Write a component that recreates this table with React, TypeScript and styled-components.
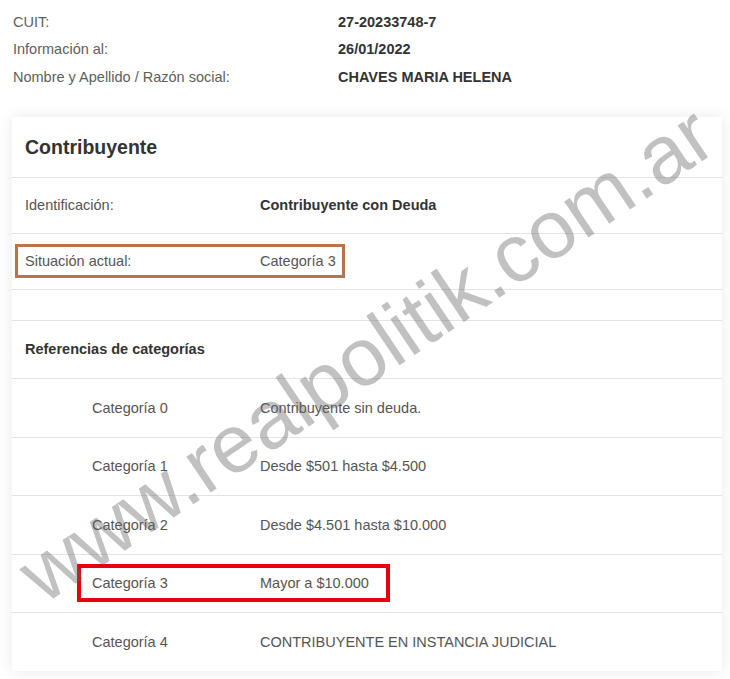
import styled, { createGlobalStyle } from "styled-components";

const GlobalStyle = createGlobalStyle`
  html, body {
    margin: 0;
    padding: 0;
    background: #fff;
  }
  body {
    font-family: "Liberation Sans", Arial, sans-serif;
    font-size: 14.5px;
    color: #555;
  }
  * {
    box-sizing: border-box;
  }
`;

const Page = styled.div`
  position: relative;
  width: 730px;
  min-height: 679px;
  overflow: hidden;
  background: #fff;
`;

const InfoGrid = styled.div`
  display: grid;
  grid-template-columns: 325px auto;
  grid-auto-rows: 27.5px;
  align-items: center;
  padding: 8px 13px 0 13px;
`;

const InfoLabel = styled.div`
  color: #5e5e5e;
`;

const InfoValue = styled.div`
  color: #333;
  font-weight: 700;
`;

const Card = styled.div`
  margin: 26px 8px 0 12px;
  background: #fff;
  box-shadow: 0 0 14px rgba(0, 0, 0, 0.09);
`;

const CardHeader = styled.div`
  height: 61px;
  display: flex;
  align-items: center;
  padding: 2px 13px 0 13px;
  border-bottom: 1px solid #e4e4e4;
  font-size: 19.5px;
  font-weight: 700;
  color: #333;
`;

const Row = styled.div<{ $h: number; $indent?: number }>`
  height: ${({ $h }) => $h}px;
  display: flex;
  align-items: center;
  padding-left: ${({ $indent }) => $indent ?? 13}px;
  border-bottom: 1px solid #e4e4e4;

  &:last-child {
    border-bottom: none;
  }
`;

const Label = styled.div<{ $w: number }>`
  width: ${({ $w }) => $w}px;
  flex-shrink: 0;
  color: #555;
`;

const Value = styled.div<{ $bold?: boolean }>`
  color: ${({ $bold }) => ($bold ? "#333" : "#555")};
  font-weight: ${({ $bold }) => ($bold ? 700 : 400)};
`;

const SubTitle = styled.div`
  font-weight: 700;
  color: #333;
`;

const Highlight = styled.div<{ $color: string; $border: number; $left: number; $right: number; $h: number }>`
  display: flex;
  align-items: center;
  height: ${({ $h }) => $h}px;
  margin-left: -${({ $left, $border }) => $left + $border}px;
  padding: 0 ${({ $right }) => $right}px 0 ${({ $left }) => $left}px;
  border: ${({ $border }) => $border}px solid ${({ $color }) => $color};
`;

const Watermark = styled.div`
  position: absolute;
  left: 366px;
  top: 354px;
  transform: translate(-50%, -50%) rotate(-34deg);
  white-space: nowrap;
  font-family: "Liberation Sans", Arial, sans-serif;
  font-size: 82px;
  color: rgba(100, 100, 100, 0.4);
  pointer-events: none;
`;

const categories = [
  { name: "Categoría 0", desc: "Contribuyente sin deuda.", h: 59 },
  { name: "Categoría 1", desc: "Desde $501 hasta $4.500", h: 58 },
  { name: "Categoría 2", desc: "Desde $4.501 hasta $10.000", h: 59 },
  { name: "Categoría 3", desc: "Mayor a $10.000", h: 58, mark: true },
  { name: "Categoría 4", desc: "CONTRIBUYENTE EN INSTANCIA JUDICIAL", h: 58 },
];

export default function App() {
  return (
    <Page>
      <GlobalStyle />
      <InfoGrid>
        <InfoLabel>CUIT:</InfoLabel>
        <InfoValue>27-20233748-7</InfoValue>
        <InfoLabel>Información al:</InfoLabel>
        <InfoValue>26/01/2022</InfoValue>
        <InfoLabel>Nombre y Apellido / Razón social:</InfoLabel>
        <InfoValue>CHAVES MARIA HELENA</InfoValue>
      </InfoGrid>

      <Card>
        <CardHeader>Contribuyente</CardHeader>
        <Row $h={56}>
          <Label $w={235}>Identificación:</Label>
          <Value $bold>Contribuyente con Deuda</Value>
        </Row>
        <Row $h={56}>
          <Highlight $color="#b9734b" $border={3} $left={7} $right={6} $h={34}>
            <Label $w={235}>Situación actual:</Label>
            <Value>Categoría 3</Value>
          </Highlight>
        </Row>
        <Row $h={31} />
        <Row $h={58}>
          <SubTitle>Referencias de categorías</SubTitle>
        </Row>
        {categories.map((c) => (
          <Row key={c.name} $h={c.h} $indent={80}>
            {c.mark ? (
              <Highlight $color="#e8000e" $border={4} $left={11} $right={17} $h={38}>
                <Label $w={168}>{c.name}</Label>
                <Value>{c.desc}</Value>
              </Highlight>
            ) : (
              <>
                <Label $w={168}>{c.name}</Label>
                <Value>{c.desc}</Value>
              </>
            )}
          </Row>
        ))}
      </Card>

      <Watermark>www.realpolitik.com.ar</Watermark>
    </Page>
  );
}
